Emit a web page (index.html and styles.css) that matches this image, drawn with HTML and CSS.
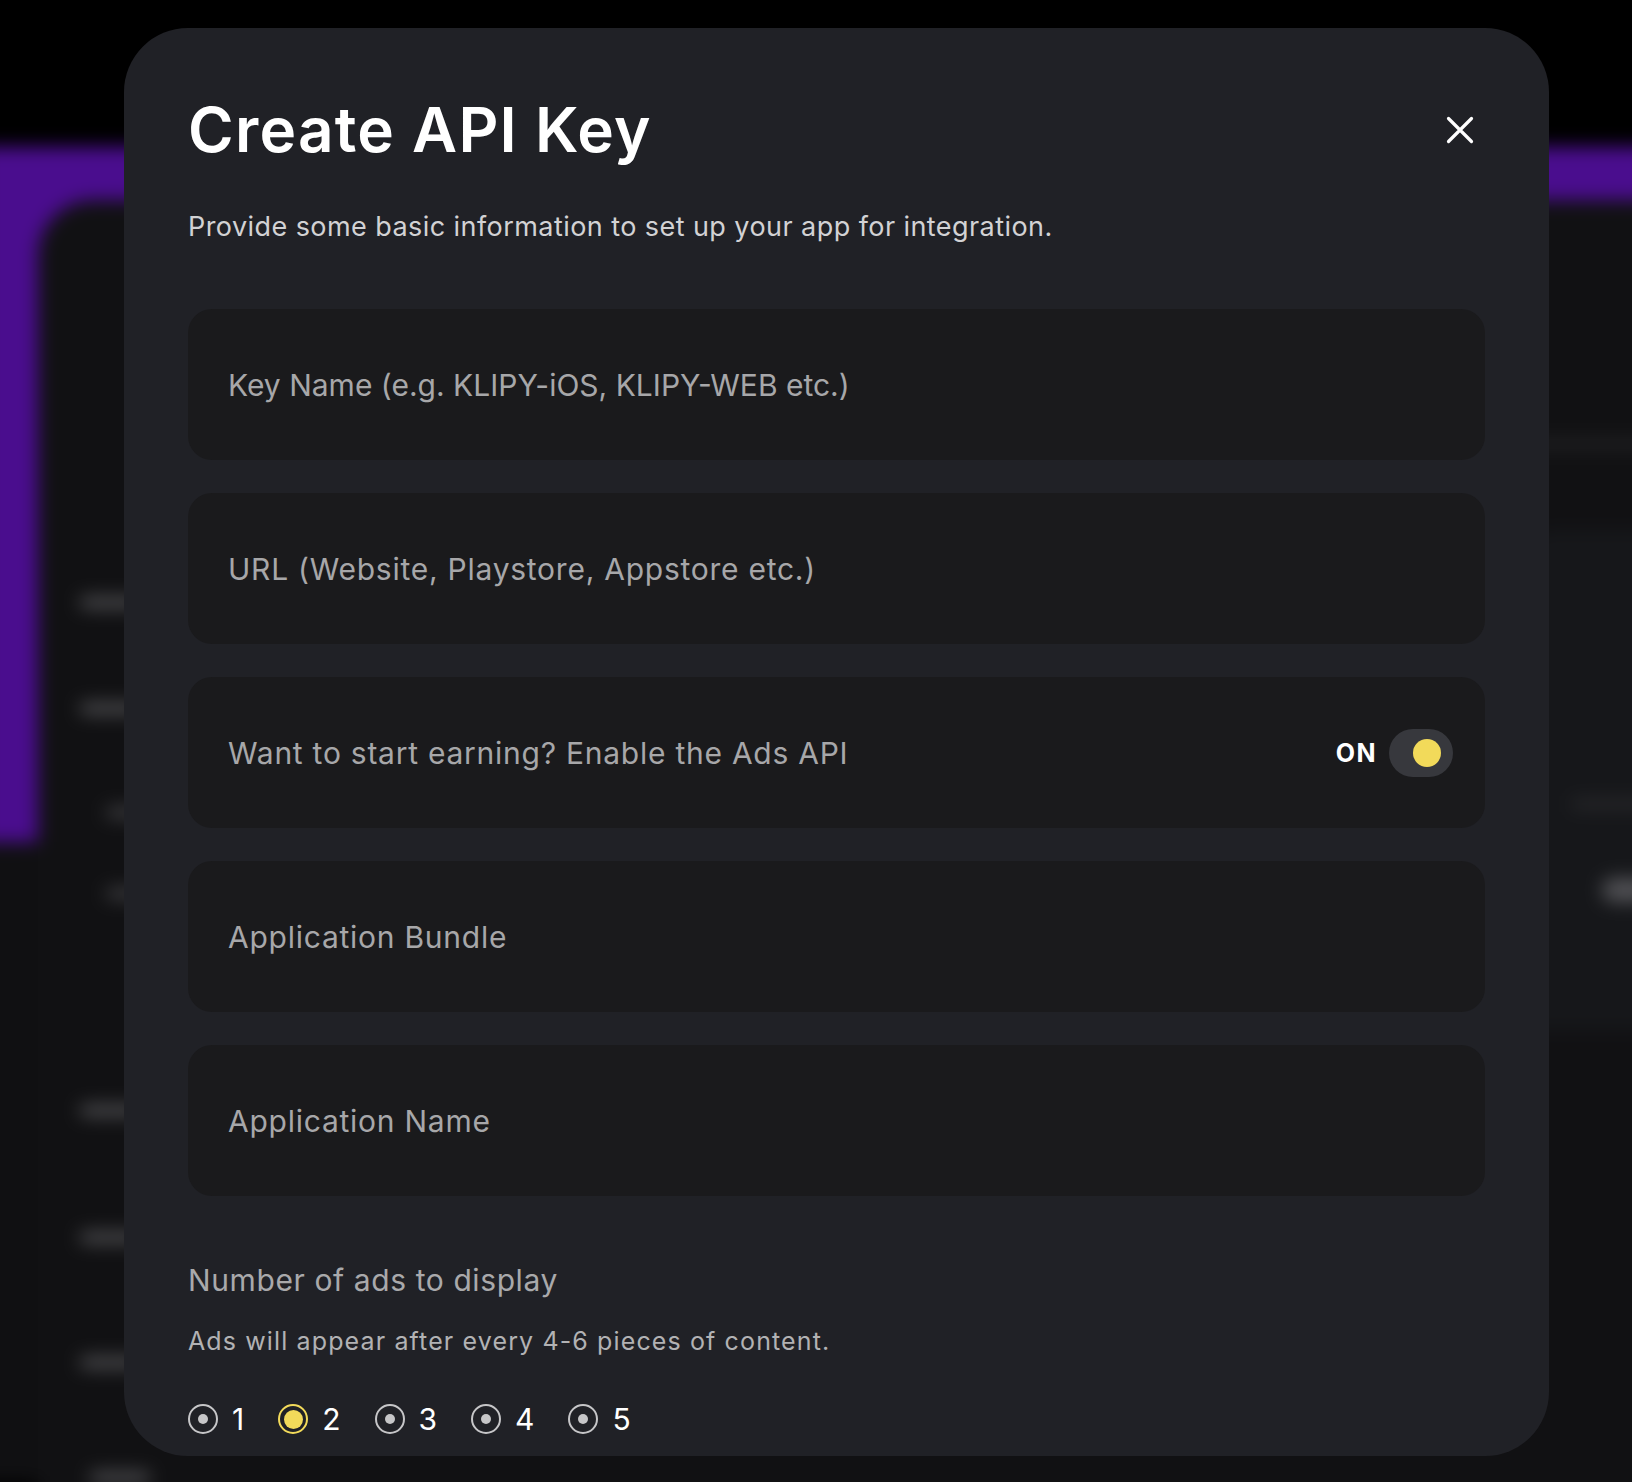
FILE: index.html
```html
<!DOCTYPE html>
<html lang="en">
<head>
<meta charset="utf-8">
<title>Create API Key</title>
<link rel="stylesheet" href="styles.css">
</head>
<body>
<div class="backdrop">
  <div class="panel">
    <div class="side-left">
      <span class="bar b1"></span>
      <span class="bar b2"></span>
      <span class="bar b3"></span>
      <span class="bar b4"></span>
      <span class="bar b5"></span>
      <span class="bar b6"></span>
      <span class="bar b7"></span>
      <span class="bar b8"></span>
    </div>
    <div class="side-right">
      <span class="rbar"></span>
      <div class="rcard">
        <span class="rcard-bar"></span>
        <span class="rcard-btn"></span>
      </div>
    </div>
  </div>
</div>

<div class="modal">
  <div class="header">
    <h1 class="title">Create API Key</h1>
    <button class="close" aria-label="Close">
      <svg viewBox="0 0 28 28" width="28" height="28"><path d="M2.5 2.5L25.5 25.5M25.5 2.5L2.5 25.5" stroke="#ffffff" stroke-width="3.2" stroke-linecap="round" fill="none"/></svg>
    </button>
  </div>
  <p class="subtitle">Provide some basic information to set up your app for integration.</p>

  <div class="fields">
    <div class="field"><span class="placeholder placeholder-caps">Key Name (e.g. KLIPY-iOS, KLIPY-WEB etc.)</span></div>
    <div class="field"><span class="placeholder">URL (Website, Playstore, Appstore etc.)</span></div>
    <div class="field field-toggle">
      <span class="placeholder">Want to start earning? Enable the Ads API</span>
      <div class="toggle-wrap">
        <span class="on">ON</span>
        <span class="toggle"><span class="knob"></span></span>
      </div>
    </div>
    <div class="field"><span class="placeholder">Application Bundle</span></div>
    <div class="field"><span class="placeholder">Application Name</span></div>
  </div>

  <h2 class="section-title">Number of ads to display</h2>
  <p class="section-note">Ads will appear after every 4-6 pieces of content.</p>

  <div class="radios">
    <label class="radio"><span class="dot"></span><span class="num">1</span></label>
    <label class="radio selected"><span class="dot"></span><span class="num">2</span></label>
    <label class="radio"><span class="dot"></span><span class="num">3</span></label>
    <label class="radio"><span class="dot"></span><span class="num">4</span></label>
    <label class="radio"><span class="dot"></span><span class="num">5</span></label>
  </div>
</div>
</body>
</html>
```

FILE: styles.css
```css
* {
  box-sizing: border-box;
  margin: 0;
  padding: 0;
}

html, body {
  width: 1632px;
  height: 1482px;
  overflow: hidden;
  background: #000;
}

body {
  position: relative;
  font-family: Inter, "Noto Sans", sans-serif;
}

/* blurred page behind the dialog */
.backdrop {
  position: absolute;
  left: -20px;
  top: 0;
  width: 1672px;
  height: 1482px;
  padding-left: 20px;
  filter: blur(9px);
  background: linear-gradient(#000 0 147px, #4a0d8e 147px 842px, #101012 842px);
}

.panel {
  margin: 200px 0 0 38px;
  height: 1320px;
  background: #111113;
  border-top-left-radius: 56px;
  display: flex;
  justify-content: space-between;
}

.side-left {
  width: 90px;
  padding-left: 42px;
  display: flex;
  flex-direction: column;
}

.bar {
  display: block;
  height: 11px;
  width: 60px;
  border-radius: 5px;
  background: #505053;
}

.b1 { margin-top: 397px; }
.b2 { margin-top: 95px; }
.b3 { margin-top: 93px; margin-left: 26px; width: 40px; background: #3e3e41; }
.b4 { margin-top: 70px; margin-left: 26px; width: 40px; background: #3e3e41; }
.b5 { margin-top: 206px; }
.b6 { margin-top: 116px; }
.b7 { margin-top: 114px; }
.b8 { margin-top: 104px; margin-left: 10px; }

.side-right {
  width: 120px;
  display: flex;
  flex-direction: column;
}

.rbar {
  display: block;
  margin-top: 240px;
  height: 8px;
  background: #262628;
}

.rcard {
  margin-top: 82px;
  height: 500px;
  background: #16171a;
  border-top-left-radius: 20px;
  display: flex;
  flex-direction: column;
}

.rcard-bar {
  display: block;
  margin-top: 270px;
  margin-left: 40px;
  height: 8px;
  background: #2c2c2e;
}

.rcard-btn {
  display: block;
  margin-top: 70px;
  margin-left: 70px;
  height: 24px;
  border-radius: 12px;
  background: #505054;
}

/* dialog */
.modal {
  position: absolute;
  left: 124px;
  top: 28px;
  width: 1425px;
  height: 1428px;
  background: #202126;
  border-radius: 64px;
  padding: 66px 64px 0;
  overflow: hidden;
}

.header {
  display: flex;
  align-items: center;
  justify-content: space-between;
  height: 72px;
}

.title {
  font-size: 62px;
  line-height: 72px;
  font-weight: 600;
  color: #ffffff;
  letter-spacing: 0.02em;
}

.close {
  width: 28px;
  height: 28px;
  margin-right: 11px;
  background: none;
  border: 0;
  display: flex;
}

.subtitle {
  margin-top: 43px;
  font-size: 27px;
  line-height: 36px;
  color: #d2d2d4;
  letter-spacing: 0.016em;
}

.fields {
  margin-top: 64px;
  display: flex;
  flex-direction: column;
  gap: 33px;
}

.field {
  height: 151px;
  border-radius: 24px;
  background: #1a1a1c;
  display: flex;
  align-items: center;
  padding: 0 32px 0 40px;
}

.placeholder {
  font-size: 30px;
  line-height: 36px;
  color: #a7a7a9;
  letter-spacing: 0.025em;
}

.placeholder-caps {
  letter-spacing: 0;
}

.field-toggle {
  justify-content: space-between;
}

.toggle-wrap {
  display: flex;
  align-items: center;
  gap: 12px;
}

.on {
  font-size: 25px;
  font-weight: 700;
  color: #ffffff;
  letter-spacing: 0.06em;
}

.toggle {
  width: 64px;
  height: 48px;
  border-radius: 24px;
  background: #37383d;
  display: flex;
  align-items: center;
  justify-content: flex-end;
  padding-right: 12px;
}

.knob {
  width: 28px;
  height: 28px;
  border-radius: 50%;
  background: #f2da5a;
}

.section-title {
  margin-top: 66px;
  font-size: 30px;
  line-height: 36px;
  font-weight: 400;
  color: #a9a9ab;
  letter-spacing: 0.02em;
}

.section-note {
  margin-top: 28px;
  font-size: 25px;
  line-height: 30px;
  color: #b2b2b4;
  letter-spacing: 0.045em;
}

.radios {
  margin-top: 48px;
  display: flex;
  align-items: center;
  gap: 34px;
  height: 30px;
}

.radio {
  display: flex;
  align-items: center;
  gap: 14px;
  font-size: 30px;
  line-height: 30px;
  color: #ffffff;
}

.dot {
  width: 30px;
  height: 30px;
  border-radius: 50%;
  border: 2px solid #c6c6c8;
  display: flex;
  align-items: center;
  justify-content: center;
}

.dot::after {
  content: "";
  width: 10px;
  height: 10px;
  border-radius: 50%;
  background: #c6c6c8;
}

.radio.selected .dot {
  border-color: #f2da5a;
}

.radio.selected .dot::after {
  width: 19px;
  height: 19px;
  background: #f2da5a;
}
```
